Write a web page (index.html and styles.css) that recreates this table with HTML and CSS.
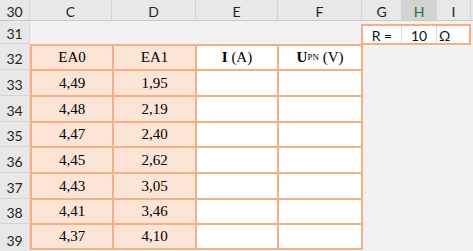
FILE: index.html
```html
<!DOCTYPE html>
<html>
<head>
<meta charset="utf-8">
<link rel="stylesheet" href="styles.css">
</head>
<body>
<div class="sheet">
  <div class="rh rh-top">30</div>
  <div class="colheads">
    <div class="ch w-c">C</div>
    <div class="ch w-d">D</div>
    <div class="ch w-e">E</div>
    <div class="ch w-f">F</div>
    <div class="ch w-g">G</div>
    <div class="ch w-h sel">H</div>
    <div class="ch w-i">I</div>
    <div class="ch w-rest"></div>
  </div>
  <div class="rh rh31">31</div>
  <div class="rbox">
    <div class="rc rc-g">R =</div>
    <div class="rc rc-h">10</div>
    <div class="rc rc-i">Ω</div>
  </div>
  <div class="rowheads">
    <div class="rh rh-r h26">32</div>
    <div class="rh rh-r h26">33</div>
    <div class="rh rh-r h26">34</div>
    <div class="rh rh-r h25">35</div>
    <div class="rh rh-r h26">36</div>
    <div class="rh rh-r h26">37</div>
    <div class="rh rh-r h25">38</div>
    <div class="rh rh-r last">39</div>
  </div>
  <div class="table">
    <div class="cell fill">EA0</div>
    <div class="cell fill">EA1</div>
    <div class="cell"><b class="bold">I</b>&nbsp;(A)</div>
    <div class="cell"><b class="bold">U</b><sub class="sub">PN</sub>&nbsp;(V)</div>

    <div class="cell fill">4,49</div><div class="cell fill">1,95</div><div class="cell"></div><div class="cell"></div>
    <div class="cell fill">4,48</div><div class="cell fill">2,19</div><div class="cell"></div><div class="cell"></div>
    <div class="cell fill">4,47</div><div class="cell fill">2,40</div><div class="cell"></div><div class="cell"></div>
    <div class="cell fill">4,45</div><div class="cell fill">2,62</div><div class="cell"></div><div class="cell"></div>
    <div class="cell fill">4,43</div><div class="cell fill">3,05</div><div class="cell"></div><div class="cell"></div>
    <div class="cell fill">4,41</div><div class="cell fill">3,46</div><div class="cell"></div><div class="cell"></div>
    <div class="cell fill">4,37</div><div class="cell fill">4,10</div><div class="cell"></div><div class="cell"></div>
  </div>
</div>
</body>
</html>
```
FILE: styles.css
```css
html, body {
  margin: 0;
  padding: 0;
  background: #f0f0f0;
}
.sheet {
  width: 473px;
  height: 251px;
  overflow: hidden;
  display: grid;
  grid-template-columns: 30px 331px 2px 108px 2px;
  grid-template-rows: 21px 23px 206px 1fr;
  background: #f2f2f2;
  font-family: Lato, "Open Sans", "Liberation Sans", sans-serif;
  font-size: 14px;
  color: #1f1f1f;
}
.rh {
  box-sizing: border-box;
  background: #e8e8e8;
  border-bottom: 1px solid #d4d4d4;
  border-right: 1px solid #dadada;
  display: flex;
  justify-content: center;
  align-items: flex-end;
  line-height: 16px;
}
.rh-top {
  grid-column: 1;
  grid-row: 1;
  padding-bottom: 0;
  border-bottom-color: #c8c8c8;
}
.rh31 {
  grid-column: 1;
  grid-row: 2;
  padding-bottom: 1px;
}
.rowheads {
  grid-column: 1;
  grid-row: 3 / 5;
  display: flex;
  flex-direction: column;
}
.rh-r {
  padding-bottom: 2px;
  flex: none;
}
.h26 { height: 26px; }
.h25 { height: 25px; }
.rh-r.last { flex: 1; border-bottom: none; }

.colheads {
  grid-column: 2 / 6;
  grid-row: 1;
  display: flex;
  background: #e8e8e8;
  border-bottom: 1px solid #c8c8c8;
}
.ch {
  box-sizing: border-box;
  flex: none;
  display: flex;
  justify-content: center;
  align-items: flex-end;
  line-height: 16px;
  border-right: 1px solid #d2d2d2;
}
.w-c { width: 82px; }
.w-d { width: 84px; }
.w-e { width: 82px; }
.w-f { width: 84px; }
.w-g { width: 40px; }
.w-h { width: 35px; }
.w-i { width: 34px; }
.w-rest { flex: 1; border-right: none; }
.ch.sel {
  background: #d3d3d3;
  color: #1e6b41;
}

.rbox {
  grid-column: 3 / 5;
  grid-row: 2;
  margin: 3px 0 -1px 0;
  border: 2px solid #f4b084;
  background: #ffffff;
  display: grid;
  grid-template-columns: 38px 35px 33px;
}
.rc {
  box-sizing: border-box;
  display: flex;
  align-items: flex-end;
  line-height: 14px;
  color: #111;
  font-size: 14px;
}
.rc-g { justify-content: center; }
.rc-h { justify-content: center; border-left: 1px solid #dcdcdc; }
.rc-i { justify-content: flex-start; padding-left: 2px; border-left: 1px solid #dcdcdc; }

.table {
  grid-column: 2 / 4;
  grid-row: 3;
  display: grid;
  grid-template-columns: 80px 81px 80px 82px;
  grid-template-rows: 23px 24px 24px 23px 24px 24px 23px 23px;
  gap: 2px;
  padding: 2px;
  background: #f4b084;
  font-family: "Liberation Serif", "Times New Roman", serif;
  font-size: 15px;
  color: #000;
}
.cell {
  background: #ffffff;
  display: flex;
  justify-content: center;
  align-items: center;
  line-height: 17px;
  white-space: nowrap;
}
.cell.fill {
  background: #fce4d6;
}
.bold { font-weight: bold; }
.sub {
  font-size: 9px;
  line-height: 9px;
  vertical-align: -3px;
}
```
